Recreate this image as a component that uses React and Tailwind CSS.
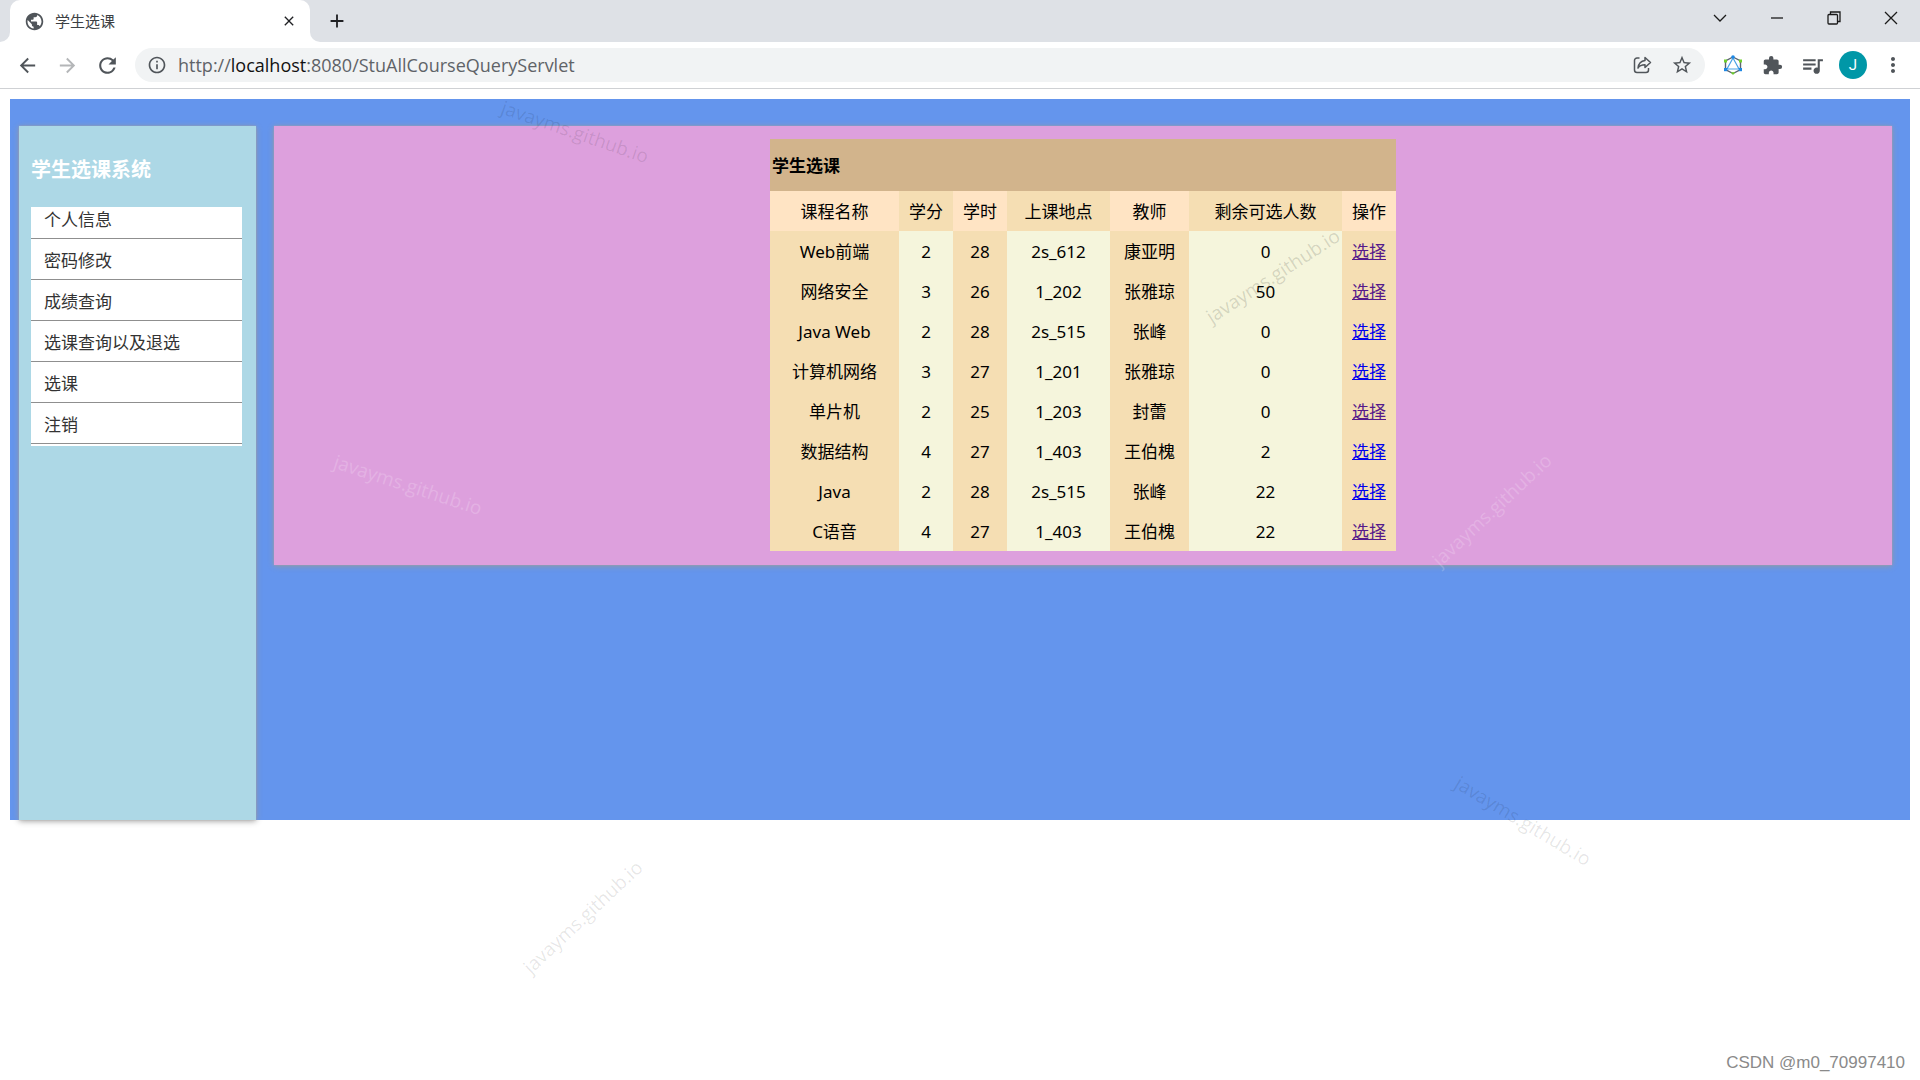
import React from 'react';
import {
  MdArrowBack,
  MdArrowForward,
  MdRefresh,
  MdInfoOutline,
  MdStarBorder,
  MdExtension,
  MdQueueMusic,
  MdMoreVert,
  MdPublic,
  MdClose,
  MdAdd,
} from 'react-icons/md';

const menu = ['个人信息', '密码修改', '成绩查询', '选课查询以及退选', '选课', '注销'];

const columns = [
  { title: '课程名称', width: 'w-[129px]' },
  { title: '学分', width: 'w-[54px]' },
  { title: '学时', width: 'w-[54px]' },
  { title: '上课地点', width: 'w-[103px]' },
  { title: '教师', width: 'w-[79px]' },
  { title: '剩余可选人数', width: 'w-[153px]' },
  { title: '操作', width: 'w-[54px]' },
];

const courses = [
  { name: 'Web前端', credit: 2, hours: 28, room: '2s_612', teacher: '康亚明', left: 0, visited: true },
  { name: '网络安全', credit: 3, hours: 26, room: '1_202', teacher: '张雅琼', left: 50, visited: true },
  { name: 'Java Web', credit: 2, hours: 28, room: '2s_515', teacher: '张峰', left: 0, visited: false },
  { name: '计算机网络', credit: 3, hours: 27, room: '1_201', teacher: '张雅琼', left: 0, visited: false },
  { name: '单片机', credit: 2, hours: 25, room: '1_203', teacher: '封蕾', left: 0, visited: true },
  { name: '数据结构', credit: 4, hours: 27, room: '1_403', teacher: '王伯槐', left: 2, visited: false },
  { name: 'Java', credit: 2, hours: 28, room: '2s_515', teacher: '张峰', left: 22, visited: false },
  { name: 'C语音', credit: 4, hours: 27, room: '1_403', teacher: '王伯槐', left: 22, visited: true },
];

const marks = [
  'left-[575px] top-[132px] rotate-[19deg] text-black/10',
  'left-[408px] top-[485px] rotate-[18deg] text-white/20',
  'left-[1492px] top-[510px] -rotate-43 text-white/20',
  'left-[583px] top-[917px] -rotate-43 text-black/10',
  'left-[1523px] top-[821px] rotate-[31deg] text-black/10',
  'left-[1273px] top-[276px] -rotate-33 text-black/15',
];

const TabStrip = () => {
  return (
    <div className="flex h-[42px] items-stretch justify-between bg-[#dee1e6] pl-[10px]">
      <div className="flex items-stretch">
        <div className="relative flex w-[300px] items-center rounded-t-[10px] bg-white pl-[14px] pr-[11px]">
          {/* curved feet of the active tab */}
          <span className="absolute -left-[10px] bottom-0 size-[10px] bg-white">
            <span className="block size-full rounded-br-[10px] bg-[#dee1e6]" />
          </span>
          <span className="absolute -right-[10px] bottom-0 size-[10px] bg-white">
            <span className="block size-full rounded-bl-[10px] bg-[#dee1e6]" />
          </span>
          <MdPublic className="size-[21px] text-[#50555a]" />
          <span className="ml-[10px] flex-1 text-[15px] text-[#3c4043]">学生选课</span>
          <button aria-label="关闭标签页" className="flex size-5 items-center justify-center text-[#202124]">
            <MdClose className="size-4" />
          </button>
        </div>
        <button aria-label="新标签页" className="ml-4 flex w-[22px] items-center justify-center text-[#202124]">
          <MdAdd className="size-6" />
        </button>
      </div>
      <div className="flex h-9 items-center pr-px text-[#1b1b1b]">
        <button aria-label="搜索标签页" className="flex w-[57px] justify-center">
          <svg className="h-2 w-[14px]" viewBox="0 0 14 8" fill="none" stroke="currentColor" strokeWidth="1.3">
            <path d="M1 1l6 6 6-6" />
          </svg>
        </button>
        <button aria-label="最小化" className="flex w-[57px] justify-center">
          <svg className="h-[14px] w-[14px]" viewBox="0 0 14 14" stroke="currentColor" strokeWidth="1.3">
            <path d="M1 7h12" />
          </svg>
        </button>
        <button aria-label="还原" className="flex w-[57px] justify-center">
          <svg className="h-[14px] w-[14px]" viewBox="0 0 14 14" fill="none" stroke="currentColor" strokeWidth="1.3">
            <rect x="1" y="3.5" width="9.5" height="9.5" rx="1" />
            <path d="M3.5 3.5V1H13v9.5h-2.5" />
          </svg>
        </button>
        <button aria-label="关闭" className="flex w-[57px] justify-center">
          <svg className="h-[14px] w-[14px]" viewBox="0 0 14 14" stroke="currentColor" strokeWidth="1.3">
            <path d="M1 1l12 12M13 1L1 13" />
          </svg>
        </button>
      </div>
    </div>
  );
};

const Toolbar = () => {
  return (
    <div className="flex h-[47px] items-center border-b border-[#cfd1d4] bg-white pl-[16px] pr-[15px] text-[#50555a]">
      <button aria-label="后退" className="mr-[17px]">
        <MdArrowBack className="size-[23px]" />
      </button>
      <button aria-label="前进" className="mr-[16px] text-[#b4b6b8]">
        <MdArrowForward className="size-[23px]" />
      </button>
      <button aria-label="重新加载" className="mr-[15px]">
        <MdRefresh className="size-[25px]" />
      </button>
      <div className="flex h-[34px] flex-1 items-center rounded-full bg-[#f1f3f4] pl-3 pr-3">
        <MdInfoOutline className="size-[20px]" />
        <a href="#" className="ml-[11px] flex-1 font-['Open_Sans','Noto_Sans_CJK_SC',sans-serif] text-[18px] text-[#5f6368]">
          http://<span className="text-[#111]">localhost</span>:8080/StuAllCourseQueryServlet
        </a>
        <button aria-label="分享" className="mr-[19px]">
          <svg className="size-5" viewBox="0 0 20 20" fill="none" stroke="currentColor" strokeWidth="1.5" strokeLinejoin="round">
            <path d="M7.5 3H5A2.5 2.5 0 002.500 5.500v9.500A2.500 2.500 0 005 17.500h9A2.500 2.500 0 0016.500 15v-2" />
            <path d="M13 2.500l5.500 5-5.500 5V9.800c-3.500 0-5.500.7-7 3.200.5-4 2.500-7 7-7.500z" />
          </svg>
        </button>
        <button aria-label="收藏">
          <MdStarBorder className="size-[22px]" />
        </button>
      </div>
      <button aria-label="扩展" className="ml-[18px]">
        <svg className="size-5" viewBox="0 0 20 20" fill="none">
          <path d="M10 2l7.500 4v8.500L10 18.500l-7.500-4V6z" stroke="#5b6570" strokeWidth="1.4" />
          <path d="M10 3l6 11H4z" stroke="#4aa3e6" strokeWidth="1.2" />
          <g fill="#1e88e5">
            <circle cx="10" cy="2" r="1.8" />
            <rect x="1" y="13" width="3.2" height="3.2" />
            <rect x="15.8" y="13" width="3.2" height="3.2" />
          </g>
          <g fill="#6fcf2c">
            <rect x="1" y="4.5" width="3" height="3" />
            <rect x="16" y="4.5" width="3" height="3" />
            <path d="M7.800 17.200h4.400L10 20z" />
          </g>
        </svg>
      </button>
      <button aria-label="扩展程序" className="ml-[19px]">
        <MdExtension className="size-[21px]" />
      </button>
      <button aria-label="媒体控制" className="ml-[17px]">
        <MdQueueMusic className="size-[25px]" />
      </button>
      <button
        aria-label="用户"
        className="ml-[14px] flex size-7 items-center justify-center rounded-full bg-[#0097a7] font-['Roboto',sans-serif] text-[15px] text-white"
      >
        J
      </button>
      <button aria-label="更多" className="ml-[14px]">
        <MdMoreVert className="size-[24px]" />
      </button>
    </div>
  );
};

const Sidebar = () => {
  return (
    <aside className="min-h-[694px] w-[237px] shrink-0 bg-[#add8e6] pl-3 pr-[14px] pt-[29px] shadow-[0_0_1px_#b9a9a5,0_1px_6px_#999999]">
      <h2 className="mb-[22px] text-[20px] font-bold leading-[30px] text-white">学生选课系统</h2>
      <ul className="bg-white pb-[2px] text-[17px] text-[#333]">
        {menu.map((item, i) => (
          <li key={item} className={`border-b border-[#8f8f8f] px-[13px] pb-[6px] leading-[25px] ${i === 0 ? '' : 'pt-[9px]'}`}>
            <a href="#">{item}</a>
          </li>
        ))}
      </ul>
    </aside>
  );
};

const CourseTable = () => {
  return (
    <table className="mx-auto table-fixed border-collapse text-center text-[17px] text-black">
      <thead>
        <tr className="h-[52px] bg-[#d2b48c]">
          <th colSpan={7} className="pl-[2px] pt-[2px] text-left font-bold">
            学生选课
          </th>
        </tr>
        <tr className="h-[40px]">
          {columns.map((col) => (
            <th key={col.title} className={`${col.width} whitespace-nowrap pt-[2px] font-normal odd:bg-[#ffe4c4] even:bg-[#f5deb3]`}>
              {col.title}
            </th>
          ))}
        </tr>
      </thead>
      <tbody>
        {courses.map((course) => (
          <tr key={course.name} className="h-[40px] *:pt-[2px] *:odd:bg-[#f5deb3] *:even:bg-[#f5f5dc]">
            <td>{course.name}</td>
            <td>{course.credit}</td>
            <td>{course.hours}</td>
            <td>{course.room}</td>
            <td>{course.teacher}</td>
            <td>{course.left}</td>
            <td>
              <a href="#" className={course.visited ? 'text-[#551a8b] underline' : 'text-[#0000ee] underline'}>
                选择
              </a>
            </td>
          </tr>
        ))}
      </tbody>
    </table>
  );
};

const App = () => {
  return (
    <div className="relative min-h-screen overflow-hidden bg-white font-['Noto_Sans','Noto_Sans_CJK_SC',sans-serif]">
      <TabStrip />
      <Toolbar />
      <div className="mx-[10px] mt-[10px] flex items-start gap-[18px] bg-[#6495ed] pl-[9px] pr-[18px] pt-[27px]">
        <Sidebar />
        <main className="flex-1 bg-[#dda0dd] pb-[14px] pt-[13px] shadow-[0_0_1px_#b9a9a5,0_1px_6px_#999999]">
          <CourseTable />
        </main>
      </div>
      <div className="pointer-events-none absolute inset-0 select-none">
        {marks.map((mark) => (
          <span
            key={mark}
            className={`absolute -translate-x-1/2 -translate-y-1/2 whitespace-nowrap font-['Open_Sans',sans-serif] text-[19px] ${mark}`}
          >
            javayms.github.io
          </span>
        ))}
        <span className="absolute bottom-[5px] right-[15px] font-['Liberation_Sans',sans-serif] text-[17px] text-[#8a8a8a]">
          CSDN @m0_70997410
        </span>
      </div>
    </div>
  );
};

export default App;
